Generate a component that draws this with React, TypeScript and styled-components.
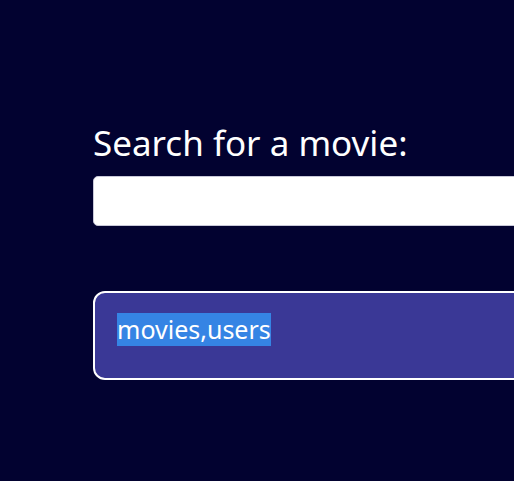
import React from "react";
import styled, { createGlobalStyle } from "styled-components";

const Global = createGlobalStyle`
  html, body { margin: 0; padding: 0; background: #020230; overflow: hidden; }
  body { font-family: "Noto Sans", "Open Sans", sans-serif; }
`;

const Page = styled.div`
  width: 514px;
  height: 481px;
  background: #020230;
  padding: 121px 0 0 93px;
  box-sizing: border-box;
  display: flex;
  flex-direction: column;
  overflow: hidden;
`;

const Label = styled.label`
  color: #ffffff;
  font-size: 35px;
  line-height: 44px;
  margin-left: 0px;
  white-space: nowrap;
`;

const SearchInput = styled.input`
  width: 520px;
  height: 50px;
  margin-top: 11px;
  border: 1px solid #c8c8d8;
  border-radius: 5px;
  background: #ffffff;
  box-sizing: border-box;
  outline: none;
`;

const ResultBox = styled.div`
  width: 540px;
  height: 89px;
  margin-top: 65px;
  border: 2px solid #ffffff;
  border-radius: 12px;
  background: #3a3896;
  box-sizing: border-box;
  padding: 20px 0 0 22px;
`;

const Selected = styled.span`
  background: #3584e4;
  color: #ffffff;
  font-size: 25px;
  line-height: 33px;
  display: inline-block;
`;

export default function App() {
  return (
    <>
      <Global />
      <Page>
        <Label>Search for a movie:</Label>
        <SearchInput type="text" />
        <ResultBox>
          <Selected>movies,users</Selected>
        </ResultBox>
      </Page>
    </>
  );
}
